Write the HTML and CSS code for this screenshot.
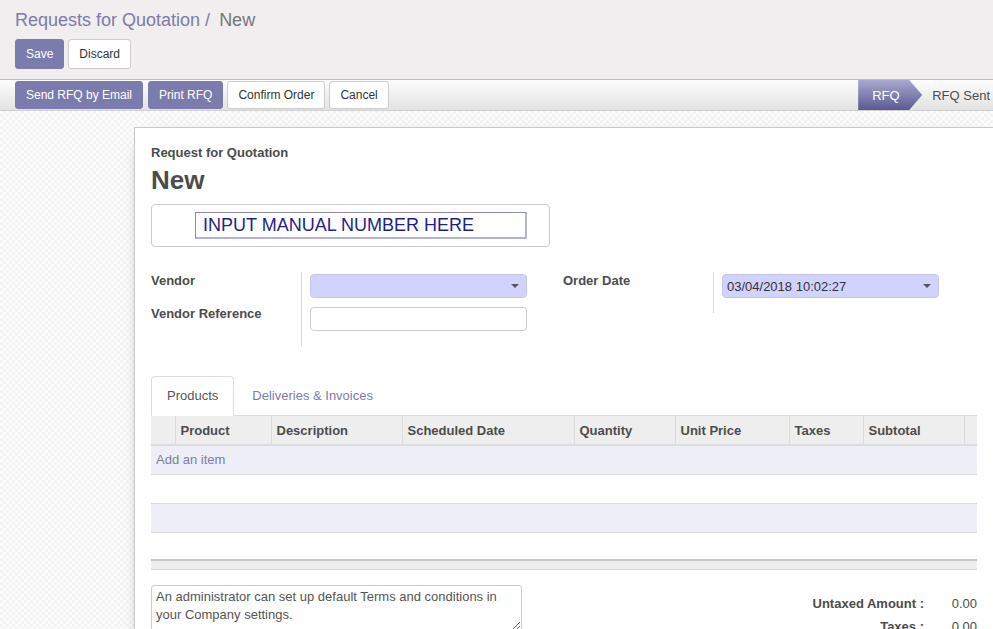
FILE: index.html
```html
<!DOCTYPE html>
<html>
<head>
<meta charset="utf-8">
<link rel="stylesheet" href="styles.css">
</head>
<body>
<div class="control-panel">
  <div class="breadcrumb">
    <span class="crumb-link">Requests for Quotation</span><span class="crumb-sep">/</span><span class="crumb-active">New</span>
  </div>
  <div class="cp-buttons">
    <button class="btn btn-sm btn-primary">Save</button>
    <button class="btn btn-sm btn-default">Discard</button>
  </div>
</div>
<div class="statusbar">
  <div class="status-buttons">
    <button class="btn btn-xs btn-primary btn-wide">Send RFQ by Email</button>
    <button class="btn btn-xs btn-primary">Print RFQ</button>
    <button class="btn btn-xs btn-default">Confirm Order</button>
    <button class="btn btn-xs btn-default">Cancel</button>
  </div>
  <div class="status-steps">
    <span class="step step-active">RFQ</span>
    <span class="step">RFQ Sent</span>
  </div>
</div>
<div class="sheet-bg">
  <div class="sheet">
    <div class="doc-label">Request for Quotation</div>
    <h1 class="doc-title">New</h1>
    <div class="manual-box">
      <div class="manual-input">INPUT MANUAL NUMBER HERE</div>
    </div>
    <div class="groups">
      <div class="group">
        <div class="g-label">Vendor</div>
        <div class="g-field"><div class="select required"><span></span><i class="caret"></i></div></div>
        <div class="g-label">Vendor Reference</div>
        <div class="g-field last"><div class="input"></div></div>
      </div>
      <div class="group">
        <div class="g-label">Order Date</div>
        <div class="g-field last"><div class="select required"><span>03/04/2018 10:02:27</span><i class="caret"></i></div></div>
      </div>
    </div>
    <div class="tabs">
      <div class="tab active">Products</div>
      <div class="tab">Deliveries &amp; Invoices</div>
    </div>
    <table class="lines">
      <colgroup>
        <col class="c-handle"><col class="c-product"><col class="c-desc"><col class="c-date"><col class="c-qty"><col class="c-price"><col class="c-taxes"><col class="c-sub"><col class="c-del">
      </colgroup>
      <thead>
        <tr><th></th><th>Product</th><th>Description</th><th>Scheduled Date</th><th>Quantity</th><th>Unit Price</th><th>Taxes</th><th>Subtotal</th><th></th></tr>
      </thead>
      <tbody>
        <tr class="odd"><td colspan="9" class="add-item">Add an item</td></tr>
        <tr><td colspan="9"></td></tr>
        <tr class="odd"><td colspan="9"></td></tr>
        <tr><td colspan="9"></td></tr>
      </tbody>
      <tfoot>
        <tr><td colspan="9"></td></tr>
      </tfoot>
    </table>
    <div class="bottom">
      <textarea class="notes">An administrator can set up default Terms and conditions in your Company settings.</textarea>
      <div class="totals">
        <div class="t-label">Untaxed Amount :</div><div class="t-value">0.00</div>
        <div class="t-label">Taxes :</div><div class="t-value">0.00</div>
      </div>
    </div>
  </div>
</div>
</body>
</html>
```
FILE: styles.css
```css
* { box-sizing: border-box; }
html, body { margin: 0; padding: 0; }
body {
  width: 993px;
  height: 629px;
  overflow: hidden;
  font-family: "Liberation Sans", Arial, sans-serif;
  font-size: 13px;
  color: #4c4c4c;
  background: #f9f9f9;
}
.control-panel {
  background: #f0eeee;
  padding: 10px 15px 10px;
  border-bottom: 1px solid #bdbdbd;
}
.breadcrumb {
  font-size: 18px;
  line-height: 20px;
  height: 20px;
  white-space: nowrap;
}
.crumb-link { color: #7c7bad; }
.crumb-sep { color: #7c7bad; padding: 0 9px 0 5px; }
.crumb-active { color: #777; }
.cp-buttons {
  display: flex;
  gap: 4px;
  margin-top: 9px;
}
.btn {
  font-family: "Liberation Sans", Arial, sans-serif;
  font-size: 12px;
  line-height: 18px;
  border: 1px solid #ccc;
  border-radius: 3px;
  background: #fff;
  color: #333;
  margin: 0;
  white-space: nowrap;
}
.btn-sm { padding: 5px 10px; }
.btn-xs { padding: 4px 10px; }
.btn-primary {
  background: #7c7bad;
  border-color: #7c7bad;
  color: #fff;
}
.statusbar {
  height: 31px;
  display: flex;
  align-items: center;
  justify-content: space-between;
  padding-left: 15px;
  background: linear-gradient(to bottom, #fdfdfd, #e2e2e2);
  border-bottom: 1px solid #cfcfcf;
}
.status-buttons { display: flex; gap: 4px; }
.status-buttons .btn-wide { margin-right: 1px; }
.status-steps {
  display: flex;
  align-self: stretch;
  align-items: stretch;
}
.step {
  display: flex;
  align-items: center;
  font-size: 13px;
  color: #4c4c4c;
  padding: 0 3px 0 10px;
}
.step-active {
  color: #fff;
  width: 64px;
  padding: 0 0 0 14px;
  background: linear-gradient(to bottom, #a9a8cf, #5b5a92);
  clip-path: polygon(0 0, 51px 0, 64px 50%, 51px 100%, 0 100%);
}
.sheet-bg {
  height: 520px;
  padding: 16px 0 0 134px;
  background-color: #fbfbfb;
  background-image: repeating-conic-gradient(#f3f3f3 0 25%, #fdfdfd 0 50%);
  background-size: 6px 6px;
}
.sheet {
  width: 860px;
  min-height: 520px;
  background: #fff;
  border: 1px solid #c9c9c9;
  box-shadow: 0 5px 20px -15px #000;
  padding: 16px 16px 0;
}
.doc-label {
  font-weight: bold;
  line-height: 18px;
}
.doc-title {
  margin: 3px 0 0;
  font-size: 26px;
  line-height: 30px;
  font-weight: bold;
  color: #4c4c4c;
}
.manual-box {
  margin-top: 9px;
  width: 399px;
  height: 43px;
  border: 1px solid #ccc;
  border-radius: 4px;
  padding: 7px 0 0 43px;
}
.manual-input {
  width: 332px;
  height: 27px;
  border-style: solid;
  border-width: 1px 2px 2px 1px;
  border-color: #8a89b3 #b3b3d2 #b3b3d2 #8a89b3;
  font-size: 18px;
  line-height: 24px;
  padding-left: 7px;
  color: #1f1f8a;
}
.groups {
  display: grid;
  grid-template-columns: 412px 1fr;
  margin-top: 25px;
}
.group {
  display: grid;
  grid-template-columns: 150px 226px;
  align-content: start;
}
.g-label {
  font-weight: bold;
  line-height: 18px;
}
.g-field {
  border-left: 1px solid #d9d9d9;
  padding: 2px 0 7px 8px;
}
.g-field.last { padding-bottom: 15px; }
.select, .input {
  height: 24px;
  border: 1px solid #ccc;
  border-radius: 4px;
  display: flex;
  align-items: center;
  justify-content: space-between;
  padding: 0 7px 0 4px;
  color: #333;
}
.select.required { background: #d2d2ff; border-color: #c6c6e8; }
.caret {
  width: 0;
  height: 0;
  border-left: 4px solid transparent;
  border-right: 4px solid transparent;
  border-top: 4px solid #555;
}
.tabs {
  display: flex;
  margin-top: 30px;
  border-bottom: 1px solid #ddd;
  height: 40px;
}
.tab {
  padding: 10px 15px;
  line-height: 18px;
  color: #7c7bad;
  border: 1px solid transparent;
  border-radius: 4px 4px 0 0;
  margin-right: 2px;
  margin-bottom: -1px;
}
.tab.active {
  color: #555;
  background: #fff;
  border-color: #ddd #ddd transparent;
}
.lines {
  width: 826px;
  border-collapse: collapse;
  table-layout: fixed;
}
.c-handle { width: 24px; }
.c-product { width: 96px; }
.c-desc { width: 131px; }
.c-date { width: 172px; }
.c-qty { width: 101px; }
.c-price { width: 114px; }
.c-taxes { width: 74px; }
.c-sub { width: 101px; }
.c-del { width: 13px; }
.lines th {
  background: #eee;
  text-align: left;
  font-weight: bold;
  height: 29px;
  padding: 0 5px;
  border-left: 1px solid #dcdcdc;
  border-bottom: 2px solid #dcdcdc;
  white-space: nowrap;
}
.lines th:first-child { border-left: none; }
.lines tbody td {
  height: 29px;
  padding: 0 5px;
  border-bottom: 1px solid #dcdcdc;
}
.lines tbody tr:last-child td { border-bottom: none; height: 28px; }
.lines tbody tr.odd td { background: #eeeef6; }
.add-item { color: #7c7bad; }
.lines tfoot td {
  height: 9px;
  padding: 0;
  background: #eee;
  border-top: 2px solid #c8c8c8;
  border-bottom: 1px solid #d6d6d6;
}
.bottom {
  display: flex;
  justify-content: space-between;
  margin-top: 15px;
  width: 826px;
}
.notes {
  width: 371px;
  height: 46px;
  border: 1px solid #ccc;
  border-radius: 3px;
  font-family: "Liberation Sans", Arial, sans-serif;
  font-size: 13px;
  line-height: 18px;
  color: #555;
  padding: 2px 4px;
  resize: vertical;
  margin: 0;
}
.totals {
  display: grid;
  grid-template-columns: auto 53px;
  grid-auto-rows: 23px;
  padding-top: 10px;
  line-height: 18px;
}
.t-label {
  font-weight: bold;
  text-align: right;
}
.t-value { text-align: right; }
```
